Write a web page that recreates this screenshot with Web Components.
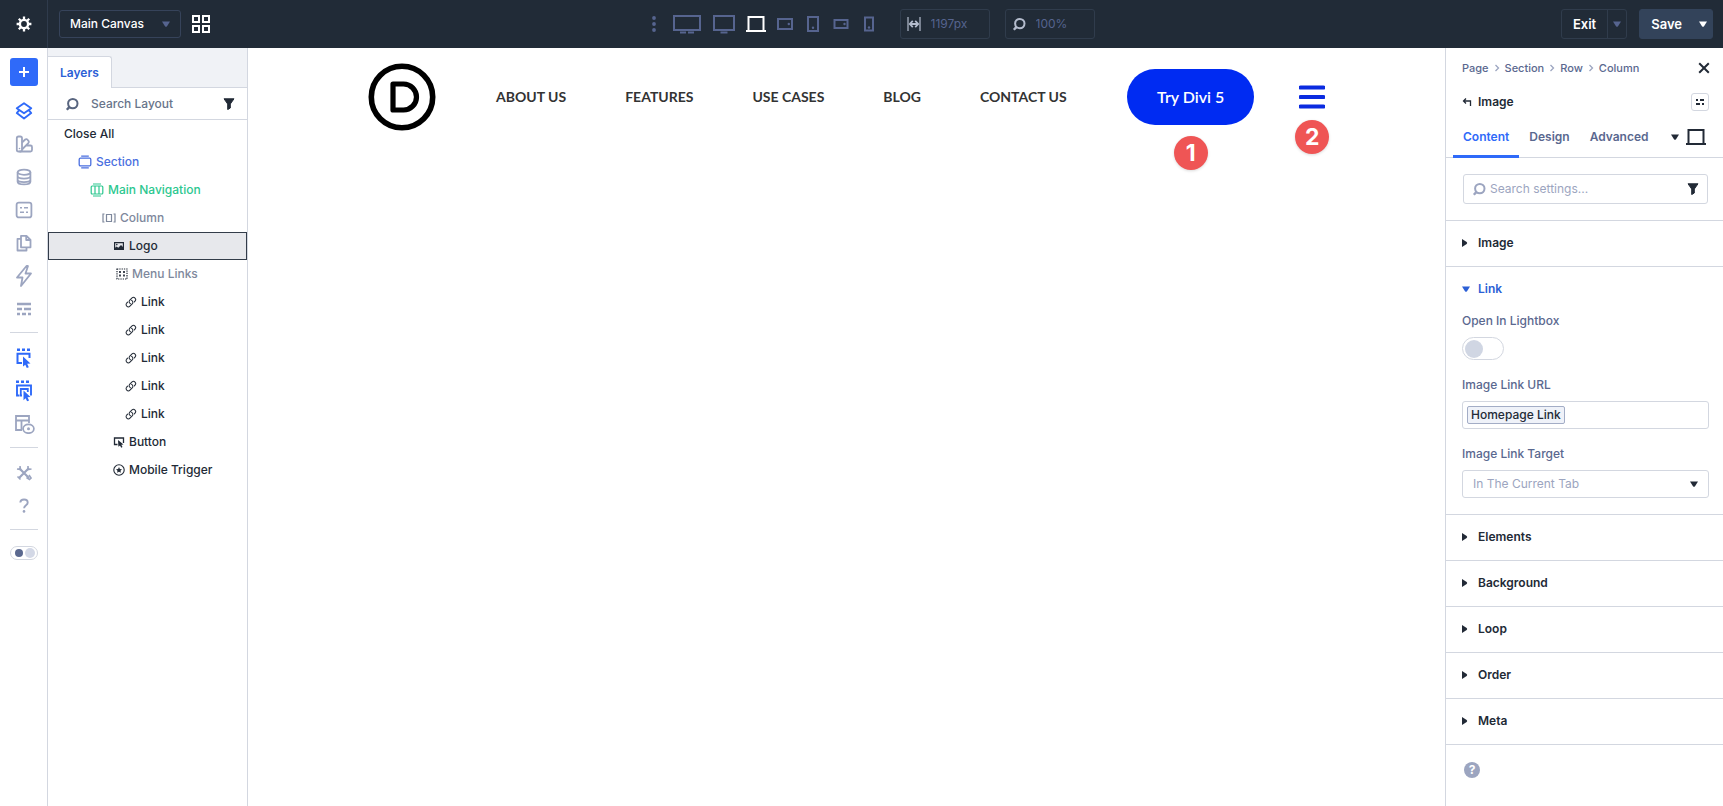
<!DOCTYPE html>
<html lang="en">
<head>
<meta charset="utf-8">
<meta name="viewport" content="width=device-width, initial-scale=1">
<title>Main Canvas</title>
<style>
    :root {
        --color-bar: #212b37;
        --color-bar-line: #36435a;
        --color-bar-muted: #56648f;
        --color-blue: #2f6af9;
        --color-link: #2b5fd6;
        --color-dark: #222a36;
        --color-label: #5a688f;
        --color-muted: #9ca5c0;
        --color-line: #d3d7e0;
    }

    body {
        margin: 0;
        min-height: 100vh;
        font: 500 12px/16px Inter, "Liberation Sans", sans-serif;
        color: var(--color-dark);
        background: #fff;
    }
</style>
</head>
<body>
<builder-app></builder-app>

<script>
const icons = {
    gear: [16, 16, `<circle cx="8" cy="8" r="4.1" fill="none" stroke="currentColor" stroke-width="2.4"/><path d="M8 .6V3.500M8 12.500v2.900M.6 8h2.900M12.500 8h2.900M2.800 2.800l2 2M11.200 11.200l2 2M2.800 13.200l2-2M11.200 4.800l2-2" stroke="currentColor" stroke-width="2.300"/>`],
    grid: [20, 20, `<path d="M2 2h6v6H2zM12 2h6v6h-6zM2 12h6v6H2zM12 12h6v6h-6z" fill="none" stroke="currentColor" stroke-width="2"/>`],
    down: [8, 6, `<path d="M0 0.500h8L5 5.200q-1 1-2 0z" fill="currentColor"/>`],
    right: [6, 8, `<path d="M0 0v8L4.700 5q1-1 0-2z" fill="currentColor"/>`],
    dots: [6, 16, `<circle cx="3" cy="2" r="1.900"/><circle cx="3" cy="8" r="1.900"/><circle cx="3" cy="14" r="1.900"/>`],
    wide: [30, 20, `<path d="M2 2h26v14H2z" fill="none" stroke="currentColor" stroke-width="2"/><path d="M8 18.500h6M16 18.500h6" stroke="currentColor" stroke-width="2"/>`],
    desktop: [24, 20, `<path d="M2 2h20v14H2z" fill="none" stroke="currentColor" stroke-width="2"/><path d="M8.500 18.500h7" stroke="currentColor" stroke-width="2"/>`],
    laptop: [20, 18, `<path d="M2.500 16V2h15v14" fill="none" stroke="currentColor" stroke-width="2"/><path d="M0 16h20" stroke="currentColor" stroke-width="2"/>`],
    tabletWide: [18, 14, `<path d="M2 2h14v10H2z" fill="none" stroke="currentColor" stroke-width="2"/><circle cx="12.800" cy="7" r="1.200"/>`],
    tablet: [14, 18, `<path d="M2 2h10v14H2z" fill="none" stroke="currentColor" stroke-width="2"/><circle cx="7" cy="12.800" r="1.200"/>`],
    phoneWide: [16, 12, `<path d="M1.500 2h13v8h-13z" fill="none" stroke="currentColor" stroke-width="2"/><circle cx="11.500" cy="6" r="1.200"/>`],
    phone: [12, 16, `<path d="M2 1.500h8v13H2z" fill="none" stroke="currentColor" stroke-width="2"/><circle cx="6" cy="11.500" r="1.200"/>`],
    width: [14, 14, `<path d="M1 0v14M13 0v14" stroke="currentColor" stroke-width="1.200"/><path d="M3 7h8M5.800 3.800L2.800 7l3 3.200M8.200 3.800l3 3.200-3 3.200" fill="none" stroke="currentColor" stroke-width="1.800"/>`],
    search: [14, 14, `<circle cx="7.800" cy="6.600" r="4.700" fill="none" stroke="currentColor" stroke-width="2"/><path d="M4.800 9.600L1.800 12.800" stroke="currentColor" stroke-width="2.400"/>`],
    filter: [12, 12, `<path d="M1 0.800h10L7.300 6v4L4.700 11.600V6z" fill="currentColor" stroke="currentColor" stroke-linejoin="round"/>`],
    plus: [12, 12, `<path d="M6 1v10M1 6h10" stroke="currentColor" stroke-width="2"/>`],
    layers: [18, 18, `<path d="M9 1.300l7.200 5L9 11.300l-7.200-5zM3.800 8.700l-2 2.400L9 16.500l7.200-5.400-2-2.400" fill="none" stroke="currentColor" stroke-width="1.900" stroke-linejoin="round"/>`],
    swatches: [18, 18, `<g fill="none" stroke="currentColor" stroke-width="1.800"><rect x="1.800" y="1.500" width="5.200" height="15" rx="1.800"/><path d="M7 7.500l3.200-3a1.600 1.600 0 0 1 2.300.2l1 1.200a1.600 1.600 0 0 1-.2 2.200L7 14.500M11 10.500h4.500a1.500 1.500 0 0 1 1.500 1.500v3a1.500 1.500 0 0 1-1.500 1.500H4.500"/></g><circle cx="4.500" cy="13.500" r=".8"/>`],
    database: [18, 18, `<g fill="none" stroke="currentColor" stroke-width="1.800"><ellipse cx="9" cy="4.200" rx="6.400" ry="2.600"/><path d="M2.600 4.200v9.500c0 3.600 12.800 3.600 12.800 0V4.200M2.600 8c0 3.400 12.800 3.400 12.800 0M2.600 11.500c0 3.400 12.800 3.400 12.800 0"/></g>`],
    presets: [18, 18, `<rect x="1.600" y="1.600" width="14.800" height="14.800" rx="2.200" fill="none" stroke="currentColor" stroke-width="1.800"/><path d="M5 6.800h2M9 6.800h4M5 11.200h4M11 11.200h2" stroke="currentColor" stroke-width="1.600"/>`],
    pages: [18, 18, `<path d="M6 1.800h5.500l4 4v7.500H6zM6 4.800H2.500v11.700h9v-3.200M11.200 2v4h4" fill="none" stroke="currentColor" stroke-width="1.800" stroke-linejoin="round"/>`],
    bolt: [18, 24, `<path d="M11.500 2L2 13.500h5.500L6 22l10-12.500h-5.500L13 2z" fill="none" stroke="currentColor" stroke-width="1.800" stroke-linejoin="round"/>`],
    bricks: [18, 18, `<path d="M2 4h14M2 9h5M9 9h7M2 14h3M7 14h4M13 14h3" stroke="currentColor" stroke-width="2.600"/>`],
    select: [18, 22, `<path d="M2 2.800h3M7 2.800h3M12 2.800h3" stroke="currentColor" stroke-width="2.600"/><path d="M7 16H2.500V6.800h12V11" fill="none" stroke="currentColor" stroke-width="2"/><path d="M8 9.500l7.500 7-3.300.3 1.600 3.400-2 .9-1.500-3.400L8 19.500z"/>`],
    selectAll: [18, 22, `<path d="M1 1.800h3M6 1.800h3M11 1.800h3" stroke="currentColor" stroke-width="2.600"/><path d="M4.500 15.500H2V5.500h14v10" fill="none" stroke="currentColor" stroke-width="1.900"/><path d="M7 15.500H5.800V9h7v3" fill="none" stroke="currentColor" stroke-width="1.800"/><path d="M8.500 10.500l7 6.500-3 .3 1.600 3.100-2 .9-1.500-3.100-2.100 2z"/>`],
    preview: [22, 20, `<path d="M9 16H3V2h13v7M3 6.500h13M8.500 6.500V16" fill="none" stroke="currentColor" stroke-width="1.800"/><ellipse cx="15.500" cy="14.800" rx="5.400" ry="4.400" fill="#fff" stroke="currentColor" stroke-width="1.700"/><circle cx="15.500" cy="14.800" r="1.500"/>`],
    tools: [16, 16, `<path d="M3 3l10 10M13 3L3 13" stroke="currentColor" stroke-width="2.200"/><path d="M1 4l3.500.5L4 1M12 1v3.500L15.500 4M1.500 11.500l3 3M10.500 12.500l3 2 1.500-1.500-2-3" fill="none" stroke="currentColor" stroke-width="1.600"/>`],
    question: [12, 16, `<path d="M2.300 4.500C2.500.6 9.700.5 9.700 4.700c0 2.600-3.600 2.600-3.600 5.600" fill="none" stroke="currentColor" stroke-width="1.900"/><circle cx="6" cy="13.400" r="1.300"/>`],
    section: [14, 14, `<rect x="1.200" y="3.200" width="11.600" height="7.600" rx="1.200" fill="none" stroke="currentColor" stroke-width="1.300"/><path d="M3.200 1.200h7.600M3.200 12.900h7.600" stroke="currentColor" stroke-width="1.200"/>`],
    row: [14, 14, `<rect x="1.200" y="3" width="11.600" height="8" rx="1" fill="none" stroke="currentColor" stroke-width="1.200"/><path d="M5 3v8M9 3v8M3 1h8M3 13h8" fill="none" stroke="currentColor" stroke-width="1.200"/>`],
    column: [14, 14, `<path d="M4.500 3.500h5v7h-5zM2.500 3H1v8h1.500M11.500 3H13v8h-1.500" fill="none" stroke="currentColor" stroke-width="1.200"/>`],
    image: [12, 12, `<path d="M1.600 2.600h8.800v6.800H1.600z" fill="none" stroke="currentColor" stroke-width="1.200"/><path d="M1.500 9.500V8.200l2-1.800 1.800 1.300L8 5l2.500 2.500v2z"/><circle cx="3.800" cy="4.600" r=".8"/>`],
    group: [12, 12, `<rect x="1" y="1" width="10" height="10" fill="none" stroke="currentColor" stroke-width="1.200" stroke-dasharray="1.300 1"/><path d="M4 3v6M8 3v6" stroke="currentColor" stroke-width="1.700" stroke-dasharray="2 1.500"/>`],
    link: [12, 12, `<path transform="scale(.5)" d="M13.200 8.700a4.500 4.500 0 0 1 1.200 7.200l-4.500 4.500a4.500 4.500 0 0 1-6.400-6.400l1.800-1.700m13.400-.6l1.700-1.800a4.500 4.500 0 0 0-6.300-6.300l-4.500 4.500a4.500 4.500 0 0 0 1.200 7.200" fill="none" stroke="currentColor" stroke-width="2.100" stroke-linecap="round"/>`],
    button: [12, 12, `<path d="M4.500 8.500h-3V2h9v5" fill="none" stroke="currentColor" stroke-width="1.300"/><path d="M5 4l5.500 4.500-2.200.3 1.200 2.300-1.300.7L7 9.500l-1.600 1.300z"/>`],
    trigger: [12, 12, `<circle cx="6" cy="6" r="5.200" fill="none" stroke="currentColor" stroke-width="1.100"/><path d="M6 3l.9 1.900 2.100.3-1.500 1.500.4 2.100L6 7.800l-1.900 1 .4-2.100L3 5.200l2.100-.3z"/>`],
    logo: [68, 68, `<circle cx="34" cy="34" r="30.700" fill="none" stroke="currentColor" stroke-width="5.600"/><path d="M25 21h10.500a13 13 0 0 1 0 26H25z" fill="none" stroke="currentColor" stroke-width="5.200" stroke-linejoin="round"/>`],
    menu: [26, 24, `<path d="M1.500 2.500h23M1.500 12h23M1.500 21.500h23" stroke="currentColor" stroke-width="4" stroke-linecap="round"/>`],
    chevron: [6, 8, `<path d="M1.500 1l3 3-3 3" fill="none" stroke="currentColor" stroke-width="1.300"/>`],
    close: [12, 12, `<path d="M1.200 1.200l9.600 9.600M10.800 1.200l-9.600 9.600" stroke="currentColor" stroke-width="2"/>`],
    back: [10, 10, `<path d="M8.500 9V4H1.500M4 1.500L1.500 4 4 6.500" fill="none" stroke="currentColor" stroke-width="1.300"/>`],
    options: [10, 8, `<path d="M1 2h2M5 2h4M1 6h4M7 6h2" stroke="currentColor" stroke-width="1.800"/>`]
}

const resets = `
    * {
        box-sizing: border-box;
    }

    button, input, select {
        margin: 0;
        padding: 0;
        border: 0;
        font: inherit;
        color: inherit;
        background: none;
    }

    button {
        display: flex;
        align-items: center;
        justify-content: center;
        cursor: pointer;
    }

    input {
        min-width: 0;
        outline: 0;
    }

    select {
        appearance: none;
        width: 100%;
        height: 100%;
    }

    a {
        color: inherit;
        text-decoration: none;
    }
`

class BaseElement extends HTMLElement {
    constructor() {
        super()
        this.attachShadow({ mode: 'open' })
    }

    connectedCallback() {
        this.shadowRoot.innerHTML = `<style>${resets}${this.styles()}</style>${this.markup()}`
    }
}

customElements.define(
    'ui-icon',
    class extends BaseElement {
        styles() {
            return `
                :host {
                    display: flex;
                    flex: none;
                }

                svg {
                    display: block;
                    fill: currentColor;
                }
            `
        }

        markup() {
            const [width, height, shape] = icons[this.getAttribute('name')]
            return `<svg width="${width}" height="${height}" viewBox="0 0 ${width} ${height}" aria-hidden="true">${shape}</svg>`
        }
    }
)

customElements.define(
    'top-bar',
    class extends BaseElement {
        styles() {
            return `
                :host {
                    display: grid;
                    grid-template-columns: 1fr auto 1fr;
                    height: 48px;
                    color: #fff;
                    background: var(--color-bar);
                }

                .left, .middle, .right, .views, .field, .split {
                    display: flex;
                    align-items: center;
                }

                .settings {
                    width: 48px;
                    height: 100%;
                    border-right: 1px solid #2f3b4c;
                }

                .canvas {
                    display: grid;
                    align-items: center;
                    width: 122px;
                    height: 28px;
                    margin: 0 10px 0 11px;
                    border: 1px solid var(--color-bar-line);
                    border-radius: 3px;
                }

                .canvas > * {
                    grid-area: 1 / 1;
                }

                .canvas select {
                    padding-left: 10px;
                }

                .canvas ui-icon {
                    justify-self: end;
                    margin-right: 10px;
                    color: var(--color-bar-muted);
                    pointer-events: none;
                }

                .middle {
                    gap: 15px;
                    padding-left: 22px;
                    color: var(--color-bar-muted);
                }

                .views {
                    gap: 10px;
                    margin-right: 7px;
                }

                .views button {
                    min-width: 18px;
                }

                .views .active {
                    color: #fff;
                }

                .field {
                    gap: 10px;
                    width: 90px;
                    height: 30px;
                    padding-left: 6px;
                    border: 1px solid #303c4c;
                    border-radius: 3px;
                }

                .field ui-icon {
                    color: #b4bccd;
                }

                .field input {
                    flex: 1;
                    width: 100%;
                    font-weight: 400;
                }

                .right {
                    justify-content: flex-end;
                    gap: 12px;
                    padding-right: 10px;
                    font-size: 13px;
                    font-weight: 600;
                }

                .split {
                    height: 30px;
                    border: 1px solid #303c4c;
                    border-radius: 3px;
                }

                .split button {
                    height: 100%;
                    padding: 0 11px;
                }

                .split button + button {
                    width: 19px;
                    padding: 0;
                    border-left: 1px solid #303c4c;
                    color: var(--color-bar-muted);
                }

                .save {
                    background: #33435a;
                    border-color: #33435a;
                }

                .save button + button {
                    border: 0;
                    color: #fff;
                }
            `
        }

        markup() {
            const views = ['wide', 'desktop', 'laptop', 'tabletWide', 'tablet', 'phoneWide', 'phone']
            return `
                <div class="left">
                    <button class="settings" aria-label="Settings"><ui-icon name="gear"></ui-icon></button>
                    <div class="canvas">
                        <select aria-label="Canvas"><option>Main Canvas</option></select>
                        <ui-icon name="down"></ui-icon>
                    </div>
                    <button aria-label="Grid"><ui-icon name="grid"></ui-icon></button>
                </div>
                <div class="middle">
                    <button aria-label="More"><ui-icon name="dots"></ui-icon></button>
                    <div class="views">
                        ${views.map((view) => `<button class="${view === 'laptop' ? 'active' : ''}" aria-label="${view}"><ui-icon name="${view}"></ui-icon></button>`).join('')}
                    </div>
                    <label class="field"><ui-icon name="width"></ui-icon><input aria-label="Width" value="1197px"></label>
                    <label class="field"><ui-icon name="search"></ui-icon><input aria-label="Zoom" value="100%"></label>
                </div>
                <div class="right">
                    <div class="split">
                        <button>Exit</button>
                        <button aria-label="Exit options"><ui-icon name="down"></ui-icon></button>
                    </div>
                    <div class="split save">
                        <button>Save</button>
                        <button aria-label="Save options"><ui-icon name="down"></ui-icon></button>
                    </div>
                </div>
            `
        }
    }
)

customElements.define(
    'tool-rail',
    class extends BaseElement {
        styles() {
            return `
                :host {
                    display: flex;
                    flex-direction: column;
                    align-items: center;
                    padding: 10px 0 0 1px;
                    border-right: 1px solid var(--color-line);
                    color: var(--color-muted);
                }

                button {
                    width: 28px;
                    height: 33px;
                }

                .add {
                    height: 28px;
                    margin-bottom: 8px;
                    border-radius: 3px;
                    color: #fff;
                    background: var(--color-blue);
                }

                .active {
                    color: var(--color-blue);
                }

                hr {
                    width: 28px;
                    margin: 7px 0 8px;
                    border: 0;
                    border-top: 1px solid var(--color-line);
                }

                .mode {
                    display: flex;
                    align-items: center;
                    gap: 2px;
                    width: 28px;
                    height: 14px;
                    margin-top: 8px;
                    padding: 0 2px;
                    border: 1px solid var(--color-line);
                    border-radius: 8px;
                }

                .mode span {
                    width: 10px;
                    height: 10px;
                    border-radius: 50%;
                    background: #d3d8e6;
                }

                .mode span:first-child {
                    width: 8px;
                    height: 8px;
                    margin-left: 1px;
                    background: var(--color-label);
                }
            `
        }

        markup() {
            const tool = (name, active) =>
                `<button class="${active ? 'active' : ''}" aria-label="${name}"><ui-icon name="${name}"></ui-icon></button>`
            return `
                <button class="add" aria-label="Add"><ui-icon name="plus"></ui-icon></button>
                ${tool('layers', true)}
                ${['swatches', 'database', 'presets', 'pages', 'bolt', 'bricks'].map((name) => tool(name)).join('')}
                <hr>
                ${tool('select', true)}
                ${tool('selectAll', true)}
                ${tool('preview')}
                <hr>
                ${tool('tools')}
                ${tool('question')}
                <hr>
                <button class="mode" aria-label="Colour mode"><span></span><span></span></button>
            `
        }
    }
)

customElements.define(
    'layer-row',
    class extends BaseElement {
        styles() {
            return `
                :host {
                    display: block;
                    border: 1px solid transparent;
                }

                :host([selected]) {
                    border-color: #333c49;
                    background: #e7e8ec;
                }

                :host([kind='section']) { color: #4a6fe0; }
                :host([kind='row']) { color: #2cc78f; }
                :host([kind='muted']) { color: #7e889c; }
                :host([kind='muted']) ui-icon[name='group'] { color: var(--color-dark); }

                button {
                    justify-content: flex-start;
                    gap: 4px;
                    width: 100%;
                    height: 26px;
                    padding-left: ${this.getAttribute('indent')}px;
                }
            `
        }

        markup() {
            const icon = this.getAttribute('icon')
            return `<button>${icon ? `<ui-icon name="${icon}"></ui-icon>` : ''}<slot></slot></button>`
        }
    }
)

customElements.define(
    'layers-panel',
    class extends BaseElement {
        styles() {
            return `
                :host {
                    display: block;
                    border-right: 1px solid var(--color-line);
                }

                .tabs {
                    display: flex;
                    align-items: flex-end;
                    height: 40px;
                    border-bottom: 1px solid var(--color-line);
                    background: #f0f2f6;
                }

                .tabs button {
                    height: 32px;
                    margin-bottom: -1px;
                    padding: 0 12px;
                    border: 1px solid var(--color-line);
                    border-width: 1px 1px 0 0;
                    border-radius: 0 3px 0 0;
                    font-weight: 600;
                    color: var(--color-link);
                    background: #fff;
                }

                .search {
                    display: flex;
                    align-items: center;
                    gap: 12px;
                    height: 32px;
                    padding: 0 12px 0 17px;
                    border-bottom: 1px solid var(--color-line);
                    color: #58657f;
                }

                input {
                    flex: 1;
                }

                input::placeholder {
                    color: #68748a;
                    opacity: 1;
                }

                .filter {
                    color: var(--color-dark);
                }
            `
        }

        markup() {
            const link = '<layer-row indent="76" icon="link">Link</layer-row>'
            return `
                <div class="tabs"><button>Layers</button></div>
                <div class="search">
                    <ui-icon name="search"></ui-icon>
                    <input type="text" placeholder="Search Layout" aria-label="Search Layout">
                    <button class="filter" aria-label="Filter"><ui-icon name="filter"></ui-icon></button>
                </div>
                <layer-row indent="15">Close All</layer-row>
                <layer-row indent="29" icon="section" kind="section">Section</layer-row>
                <layer-row indent="41" icon="row" kind="row">Main Navigation</layer-row>
                <layer-row indent="53" icon="column" kind="muted">Column</layer-row>
                <layer-row indent="64" icon="image" selected>Logo</layer-row>
                <layer-row indent="67" icon="group" kind="muted">Menu Links</layer-row>
                ${link.repeat(5)}
                <layer-row indent="64" icon="button">Button</layer-row>
                <layer-row indent="64" icon="trigger">Mobile Trigger</layer-row>
            `
        }
    }
)

customElements.define(
    'number-badge',
    class extends BaseElement {
        styles() {
            return `
                :host {
                    display: grid;
                    place-items: center;
                    width: 34px;
                    height: 34px;
                    border-radius: 50%;
                    font: 700 23px/34px Inter, "Liberation Sans", sans-serif;
                    color: #fff;
                    background: #ef5555;
                    box-shadow: 0 1px 3px rgba(0, 0, 0, .15);
                }
            `
        }

        markup() {
            return `<slot></slot>`
        }
    }
)

customElements.define(
    'site-canvas',
    class extends BaseElement {
        styles() {
            return `
                :host {
                    display: block;
                    min-width: 0;
                    padding-top: 15px;
                    font-family: Lato, "Liberation Sans", sans-serif;
                    color: #333;
                }

                header {
                    display: flex;
                    align-items: center;
                    justify-content: space-between;
                    width: 80%;
                    margin: 0 auto;
                    white-space: nowrap;
                }

                .logo {
                    color: #000;
                }

                nav {
                    display: flex;
                    gap: 59px;
                    font-size: 14px;
                    font-weight: 700;
                }

                .actions {
                    display: flex;
                    align-items: center;
                    gap: 45px;
                }

                .spot {
                    position: relative;
                }

                number-badge {
                    position: absolute;
                    top: calc(100% + 11px);
                    left: calc(50% - 17px);
                }

                .try {
                    display: block;
                    padding: 18px 30px;
                    border-radius: 30px;
                    font-size: 16px;
                    font-weight: 600;
                    line-height: 20px;
                    color: #fff;
                    background: #002bf2;
                }

                .menu {
                    color: #0a2be0;
                }
            `
        }

        markup() {
            const links = ['ABOUT US', 'FEATURES', 'USE CASES', 'BLOG', 'CONTACT US']
            return `
                <header>
                    <a class="logo" href="#" aria-label="Home"><ui-icon name="logo"></ui-icon></a>
                    <nav>${links.map((text) => `<a href="#">${text}</a>`).join('')}</nav>
                    <div class="actions">
                        <div class="spot">
                            <a class="try" href="#">Try Divi 5</a>
                            <number-badge>1</number-badge>
                        </div>
                        <div class="spot">
                            <button class="menu" aria-label="Menu"><ui-icon name="menu"></ui-icon></button>
                            <number-badge>2</number-badge>
                        </div>
                    </div>
                </header>
            `
        }
    }
)

customElements.define(
    'settings-section',
    class extends BaseElement {
        styles() {
            return `
                :host {
                    display: block;
                    border-bottom: 1px solid var(--color-line);
                }

                button {
                    justify-content: flex-start;
                    gap: 8px;
                    width: 100%;
                    height: 45px;
                    padding: 0 16px 2px;
                    font-weight: 600;
                }

                .arrow {
                    display: flex;
                    width: 8px;
                }

                :host([open]) button {
                    color: var(--color-link);
                }
            `
        }

        markup() {
            const open = this.hasAttribute('open')
            return `
                <button aria-expanded="${open}"><span class="arrow"><ui-icon name="${open ? 'down' : 'right'}"></ui-icon></span>${this.getAttribute('label')}</button>
                <slot></slot>
            `
        }
    }
)

customElements.define(
    'settings-panel',
    class extends BaseElement {
        styles() {
            return `
                :host {
                    display: block;
                    min-width: 0;
                    border-left: 1px solid var(--color-line);
                }

                .crumbs, .title, .tabs, .search, .url {
                    display: flex;
                    align-items: center;
                }

                .crumbs {
                    gap: 5px;
                    height: 40px;
                    padding: 0 13px 0 16px;
                    font-size: 11px;
                    color: var(--color-label);
                }

                .crumbs ui-icon[name='chevron'] {
                    color: var(--color-muted);
                }

                .crumbs button {
                    margin-left: auto;
                    color: var(--color-dark);
                }

                .title {
                    gap: 6px;
                    height: 28px;
                    padding: 0 14px 0 16px;
                    font-weight: 600;
                }

                .title .options {
                    width: 18px;
                    height: 18px;
                    margin-left: auto;
                    border: 1px solid var(--color-line);
                    border-radius: 3px;
                }

                .tabs {
                    height: 42px;
                    padding: 0 17px 0 7px;
                    border-bottom: 1px solid var(--color-line);
                    font-weight: 600;
                    color: var(--color-label);
                }

                .tabs button {
                    height: 42px;
                    padding: 0 10px;
                    border: solid transparent;
                    border-width: 3px 0;
                }

                .tabs .active {
                    border-bottom-color: var(--color-blue);
                    color: var(--color-blue);
                }

                .tabs .device {
                    gap: 7px;
                    margin-left: auto;
                    padding: 0;
                    color: var(--color-dark);
                }

                .search {
                    gap: 4px;
                    height: 30px;
                    margin: 16px 15px 16px 17px;
                    padding: 0 8px;
                    border: 1px solid var(--color-line);
                    border-radius: 3px;
                    color: var(--color-muted);
                }

                .search input {
                    flex: 1;
                    font-weight: 400;
                }

                input::placeholder {
                    color: var(--color-muted);
                    opacity: 1;
                }

                .search button {
                    color: var(--color-dark);
                }

                .search-area {
                    display: flow-root;
                    border-bottom: 1px solid var(--color-line);
                }

                .fields {
                    display: grid;
                    grid-template-columns: minmax(0, 1fr);
                    gap: 8px;
                    padding: 1px 14px 16px 16px;
                }

                .fields label {
                    color: var(--color-label);
                }

                .toggle {
                    appearance: none;
                    display: flex;
                    align-items: center;
                    width: 42px;
                    height: 23px;
                    margin-bottom: 9px;
                    padding: 0 2px;
                    border: 1px solid var(--color-line);
                    border-radius: 12px;
                }

                .toggle::before {
                    content: '';
                    width: 18px;
                    height: 18px;
                    border-radius: 50%;
                    background: #d0d6e3;
                }

                .url, .target {
                    height: 28px;
                    border: 1px solid var(--color-line);
                    border-radius: 3px;
                }

                .url {
                    margin-bottom: 9px;
                    padding-left: 4px;
                }

                .url span {
                    padding: 0 3px;
                    border: 1px solid #a3adc6;
                    border-radius: 2px;
                    white-space: nowrap;
                    background: #eff2f9;
                }

                .url input {
                    flex: 1;
                }

                .target {
                    display: grid;
                    align-items: center;
                    font-weight: 400;
                }

                .target > * {
                    grid-area: 1 / 1;
                }

                .target select {
                    padding-left: 10px;
                    color: var(--color-muted);
                }

                .target ui-icon {
                    justify-self: end;
                    margin-right: 10px;
                    pointer-events: none;
                }

                .help {
                    width: 16px;
                    height: 16px;
                    margin: 17px 18px;
                    border-radius: 50%;
                    font-weight: 700;
                    color: #fff;
                    background: var(--color-muted);
                }
            `
        }

        markup() {
            const chevron = '<ui-icon name="chevron"></ui-icon>'
            return `
                <div class="crumbs">
                    <a href="#">Page</a>${chevron}<a href="#">Section</a>${chevron}<a href="#">Row</a>${chevron}<a href="#">Column</a>
                    <button aria-label="Close"><ui-icon name="close"></ui-icon></button>
                </div>
                <div class="title">
                    <button aria-label="Back"><ui-icon name="back"></ui-icon></button>
                    Image
                    <button class="options" aria-label="Presets"><ui-icon name="options"></ui-icon></button>
                </div>
                <div class="tabs">
                    <button class="active">Content</button>
                    <button>Design</button>
                    <button>Advanced</button>
                    <button class="device" aria-label="Device"><ui-icon name="down"></ui-icon><ui-icon name="laptop"></ui-icon></button>
                </div>
                <div class="search-area">
                    <div class="search">
                        <ui-icon name="search"></ui-icon>
                        <input type="text" placeholder="Search settings..." aria-label="Search settings">
                        <button aria-label="Filter"><ui-icon name="filter"></ui-icon></button>
                    </div>
                </div>
                <settings-section label="Image"></settings-section>
                <settings-section label="Link" open>
                    <div class="fields">
                        <label for="lightbox">Open In Lightbox</label>
                        <input class="toggle" id="lightbox" type="checkbox">
                        <label for="url">Image Link URL</label>
                        <div class="url"><span>Homepage Link</span><input id="url" type="text"></div>
                        <label for="target">Image Link Target</label>
                        <div class="target">
                            <select id="target"><option>In The Current Tab</option><option>In The New Tab</option></select>
                            <ui-icon name="down"></ui-icon>
                        </div>
                    </div>
                </settings-section>
                <settings-section label="Elements"></settings-section>
                <settings-section label="Background"></settings-section>
                <settings-section label="Loop"></settings-section>
                <settings-section label="Order"></settings-section>
                <settings-section label="Meta"></settings-section>
                <button class="help" aria-label="Help">?</button>
            `
        }
    }
)

customElements.define(
    'builder-app',
    class extends BaseElement {
        styles() {
            return `
                :host {
                    display: grid;
                    grid-template-rows: auto 1fr;
                    min-height: 100vh;
                }

                main {
                    display: grid;
                    grid-template-columns: 48px 200px 1fr 278px;
                }
            `
        }

        markup() {
            return `
                <top-bar></top-bar>
                <main>
                    <tool-rail></tool-rail>
                    <layers-panel></layers-panel>
                    <site-canvas></site-canvas>
                    <settings-panel></settings-panel>
                </main>
            `
        }
    }
)
</script>
</body>
</html>
